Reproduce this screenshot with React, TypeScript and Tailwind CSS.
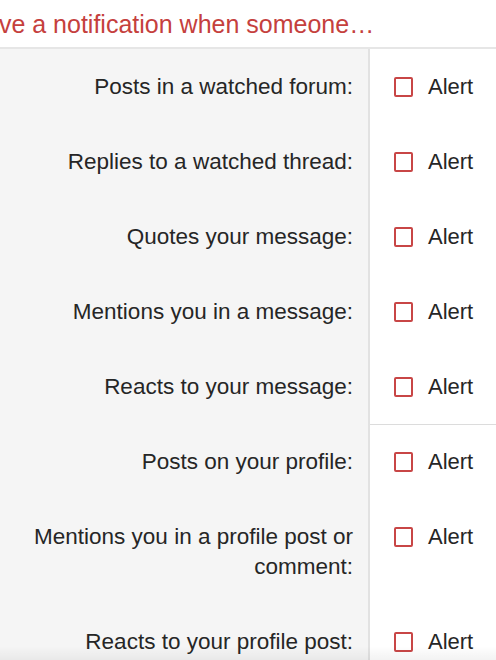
import React from "react";

const rows: { label: string; sep?: boolean }[] = [
  { label: "Posts in a watched forum:" },
  { label: "Replies to a watched thread:" },
  { label: "Quotes your message:" },
  { label: "Mentions you in a message:" },
  { label: "Reacts to your message:" },
  { label: "Posts on your profile:", sep: true },
  { label: "Mentions you in a profile post or comment:" },
  { label: "Reacts to your profile post:" },
  { label: "Comments on your profile post:" },
];

export default function App() {
  return (
    <div
      className="w-[496px] h-[660px] overflow-hidden bg-white relative text-[#262626]"
      style={{ fontFamily: '"Liberation Sans", Arial, sans-serif' }}
    >
      <div className="overflow-hidden border-b-2 border-[#e6e6e6] pt-[7px] pb-[5px]">
        <div className="whitespace-nowrap text-[25px] leading-[35px] text-[#c5403d] -ml-[65px]">
          Receive a notification when someone…
        </div>
      </div>
      <div className="flex flex-col">
        {rows.map((r, i) => (
          <div key={i} className="flex">
            <div className="w-[370px] shrink-0 bg-[#f5f5f5] border-r-2 border-[#e2e2e2] pl-[15px] pr-[15px] pt-[23px] pb-[22px] text-right text-[22.5px] leading-[30px]">
              {r.label}
            </div>
            <div
              className={
                r.sep
                  ? "flex-1 border-t border-[#dcdcdc] pl-[24px] pt-[22px] pb-[22px]"
                  : "flex-1 pl-[24px] pt-[23px] pb-[22px]"
              }
            >
              <label className="flex items-center h-[30px] text-[22px] leading-[30px]">
                <span className="w-[19px] h-[20px] border-2 border-[#c84646] rounded-[2px] bg-white shrink-0" />
                <span className="ml-[15px]">Alert</span>
              </label>
            </div>
          </div>
        ))}
      </div>
      <div className="absolute left-0 right-0 bottom-0 h-[14px] bg-gradient-to-b from-transparent to-black/5 pointer-events-none" />
    </div>
  );
}
